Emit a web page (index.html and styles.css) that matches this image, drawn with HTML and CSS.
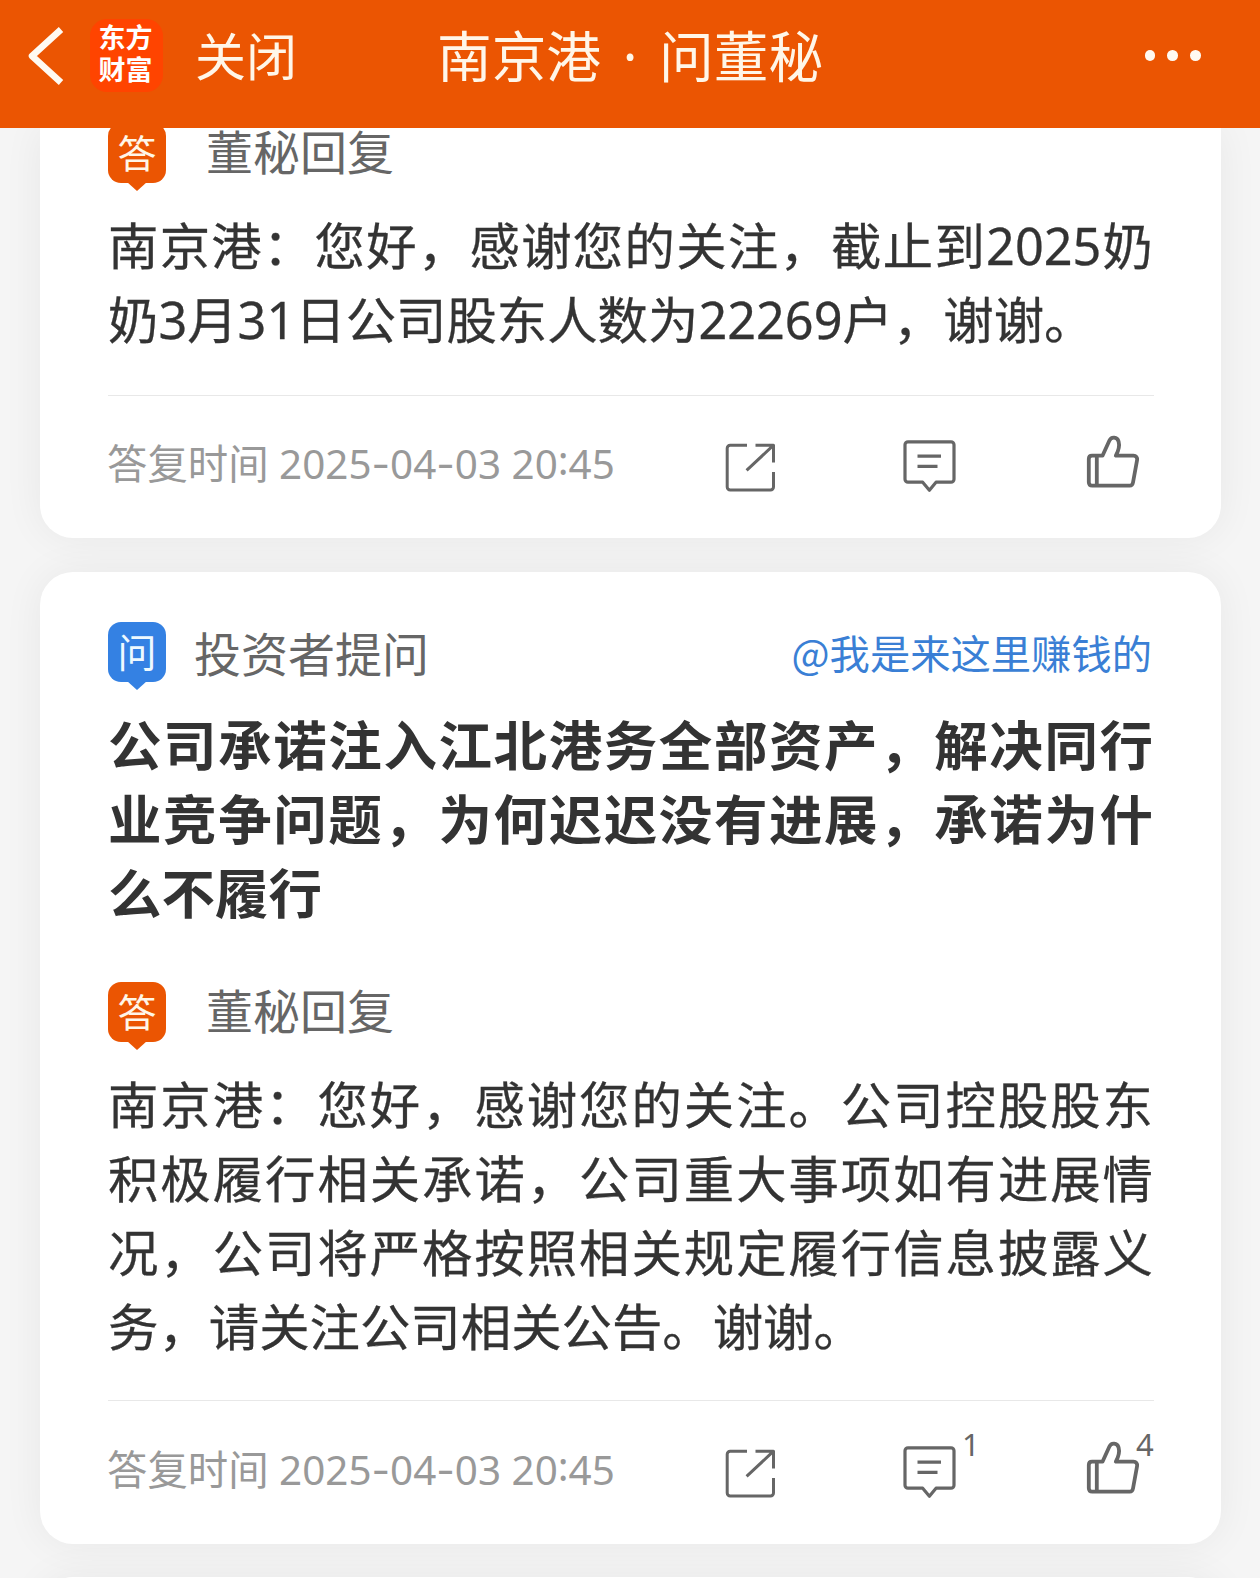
FILE: index.html
```html
<!DOCTYPE html>
<html lang="zh-CN">
<head>
<meta charset="utf-8">
<meta name="viewport" content="width=device-width">
<title>南京港 · 问董秘</title>
<link rel="stylesheet" href="styles.css">
</head>
<body>
<svg class="defs" aria-hidden="true">
  <symbol id="share" viewBox="0 0 56 60"><path d="M25 11.2H8.2a3 3 0 0 0-3 3V53a3 3 0 0 0 3 3h40.300a3 3 0 0 0 3-3V38M33.500 11.200h18v17.300M51 11.700 24.600 36.300"/></symbol>
  <symbol id="comment" viewBox="0 0 56 60"><path d="M7 7.800h43a3 3 0 0 1 3 3v34.400a3 3 0 0 1-3 3H35l-6.600 8-6.700-8H7a3 3 0 0 1-3-3V10.800a3 3 0 0 1 3-3zM16.500 22.200H40M16.500 32.400h20"/></symbol>
  <symbol id="like" viewBox="0 0 56 60"><path d="M7 21.700h10.500L24.300 6.800c2-4.600 8-4 9.300.7 1 3.700.4 8.500-2.800 14.200h17.700c2.600 0 4 1.900 3.600 4.300l-4.100 22.500c-.4 2.200-1.100 3.200-3.200 3.200H7.200c-2.300 0-3.400-1.200-3.400-3.400V25.100c0-2.200 1.100-3.400 3.200-3.400zM11.800 21.700v30"/></symbol>
</svg>

<header class="header">
  <div class="header-left">
    <svg class="back" viewBox="0 0 40 64" width="40" height="64"><path d="M36 5.500 7 32l29 26.500"/></svg>
    <div class="logo"><span>东方</span><span>财富</span></div>
    <span class="close">关闭</span>
  </div>
  <h1 class="header-title">南京港<span class="dot">·</span>问董秘</h1>
  <div class="more"><i></i><i></i><i></i></div>
</header>

<main class="feed">
  <article class="card card-first">
    <div class="row">
      <span class="badge answer">答</span>
      <span class="label reply">董秘回复</span>
    </div>
    <p class="text">南京港：您好，感谢您的关注，截止到2025奶奶3月31日公司股东人数为22269户，谢谢。</p>
    <footer class="foot">
      <span class="time">答复时间 2025<b>-</b>04<b>-</b>03 20<i>:</i>45</span>
      <div class="action"><svg class="icon thin"><use href="#share"/></svg></div>
      <div class="action comment"><svg class="icon"><use href="#comment"/></svg></div>
      <div class="action like"><svg class="icon bold"><use href="#like"/></svg></div>
    </footer>
  </article>

  <article class="card card-second">
    <div class="row">
      <span class="badge ask">问</span>
      <span class="label question">投资者提问</span>
      <a class="user">@我是来这里赚钱的</a>
    </div>
    <h2 class="title">公司承诺注入江北港务全部资产，解决同行业竞争问题，为何迟迟没有进展，承诺为什么不履行</h2>
    <div class="row">
      <span class="badge answer">答</span>
      <span class="label reply">董秘回复</span>
    </div>
    <p class="text">南京港：您好，感谢您的关注。公司控股股东积极履行相关承诺，公司重大事项如有进展情况，公司将严格按照相关规定履行信息披露义务，请关注公司相关公告。谢谢。</p>
    <footer class="foot">
      <span class="time">答复时间 2025<b>-</b>04<b>-</b>03 20<i>:</i>45</span>
      <div class="action"><svg class="icon thin"><use href="#share"/></svg></div>
      <div class="action comment"><svg class="icon"><use href="#comment"/></svg><sup class="count">1</sup></div>
      <div class="action like"><svg class="icon bold"><use href="#like"/></svg><sup class="count">4</sup></div>
    </footer>
  </article>

  <article class="card card-next"></article>
</main>
</body>
</html>
```
FILE: styles.css
```css
* { box-sizing: border-box; }

body {
  margin: 0;
  height: 1578px;
  overflow: hidden;
  background: #f5f5f5;
  color: #333;
  font-family: "Noto Sans", "Noto Sans CJK SC", sans-serif;
  text-spacing-trim: space-all;
}

.defs { display: none; }

.header {
  display: grid;
  grid-template-columns: 1fr auto 1fr;
  align-items: center;
  height: 128px;
  padding: 0 59px 17px 25px;
  background: #eb5502;
  color: #fff6e8;
}

.header-left { display: flex; align-items: center; }

.back { fill: none; stroke: #fffaf2; stroke-width: 6.500; stroke-linecap: butt; stroke-linejoin: round; }

.logo {
  display: flex;
  flex-direction: column;
  align-items: center;
  justify-content: center;
  width: 73px;
  height: 73px;
  margin-left: 25px;
  padding: 0 2px 3px 0;
  border-radius: 17px;
  background: #ff4400;
  color: #fff;
  font-size: 27px;
  font-weight: 700;
  line-height: 32px;
}

.close { margin-left: 32px; font-size: 51px; line-height: 74px; }

.header-title {
  margin: 0 -17px 0 17px;
  font-size: 54.700px;
  font-weight: 400;
  line-height: 74px;
}

.dot {
  display: inline-block;
  width: 58px;
  text-align: center;
}

.more { display: flex; gap: 12.200px; justify-content: flex-end; }
.more i { width: 10.700px; height: 10.700px; border-radius: 50%; background: #fffaf2; }

.feed { height: 1450px; overflow: hidden; }

.card {
  width: 1181px;
  margin-left: 40px;
  padding: 0 67px 0 68px;
  border-radius: 33px;
  background: #fff;
  box-shadow: 0 0 40px rgba(0, 0, 0, .06);
}

.card-first { height: 410px; border-radius: 0 0 33px 33px; padding-top: .1px; }
.card-first .row { margin-top: -5px; }
.card-second { height: 972px; margin-top: 34px; padding-top: 50px; }
.card-next { height: 200px; margin-top: 33px; }

.row { display: flex; align-items: flex-start; height: 68px; }

.badge {
  position: relative;
  width: 58px;
  height: 60px;
  border-radius: 13px;
  color: #fff6e8;
  font-size: 39px;
  line-height: 60px;
  text-align: center;
}

.badge::after {
  content: "";
  position: absolute;
  left: 19px;
  top: 59px;
  width: 20px;
  height: 9px;
  background: inherit;
  clip-path: polygon(0 0, 100% 0, 50% 100%);
}

.answer { background: #eb5502; }
.ask { background: #3481e3; color: #eef9ff; }

.label { color: #666; font-size: 47px; }
.reply { margin-left: 40px; line-height: 59px; }
.question { margin-left: 28px; line-height: 64px; }

.user {
  margin-right: 2px;
  margin-left: auto;
  color: #3a7fd5;
  font-family: "Noto Sans CJK SC", sans-serif;
  font-size: 40.300px;
  line-height: 59px;
}

.title, .text {
  margin: 18px 0 0;
  line-height: 74px;
  text-align: justify;
  -webkit-text-stroke: .3px;
}

.title { margin: 19px 1px 51px 0; font-size: 53.500px; font-weight: 700; -webkit-text-stroke: 0; }
.text { padding-right: 1px; font-size: 50.400px; }

.foot {
  display: flex;
  align-items: center;
  height: 144px;
  margin-top: 36px;
  padding: 0 13px 6px 0;
  border-top: 1px solid #e8e8e8;
}

.card-first .foot { height: 143px; margin-top: 38px; }

.time { margin-right: auto; margin-left: -1px; color: #999; font-size: 40.400px; line-height: 61px; white-space: nowrap; }
.time b { font-family: Inter, sans-serif; font-weight: 400; }
.time i { position: relative; top: -4px; font-style: normal; }

.action { position: relative; width: 56px; height: 60px; }
.comment { margin-left: 123px; }
.like { margin-left: 128px; }

.icon { display: block; width: 56px; height: 60px; fill: none; stroke: #666; stroke-width: 3.200; stroke-linejoin: round; }
.thin { stroke-width: 3; }
.bold { stroke-width: 3.800; }

.count {
  position: absolute;
  left: 61px;
  top: -13px;
  color: #666;
  font-size: 31px;
  line-height: 34px;
}

.like .count { left: 51px; }
```
